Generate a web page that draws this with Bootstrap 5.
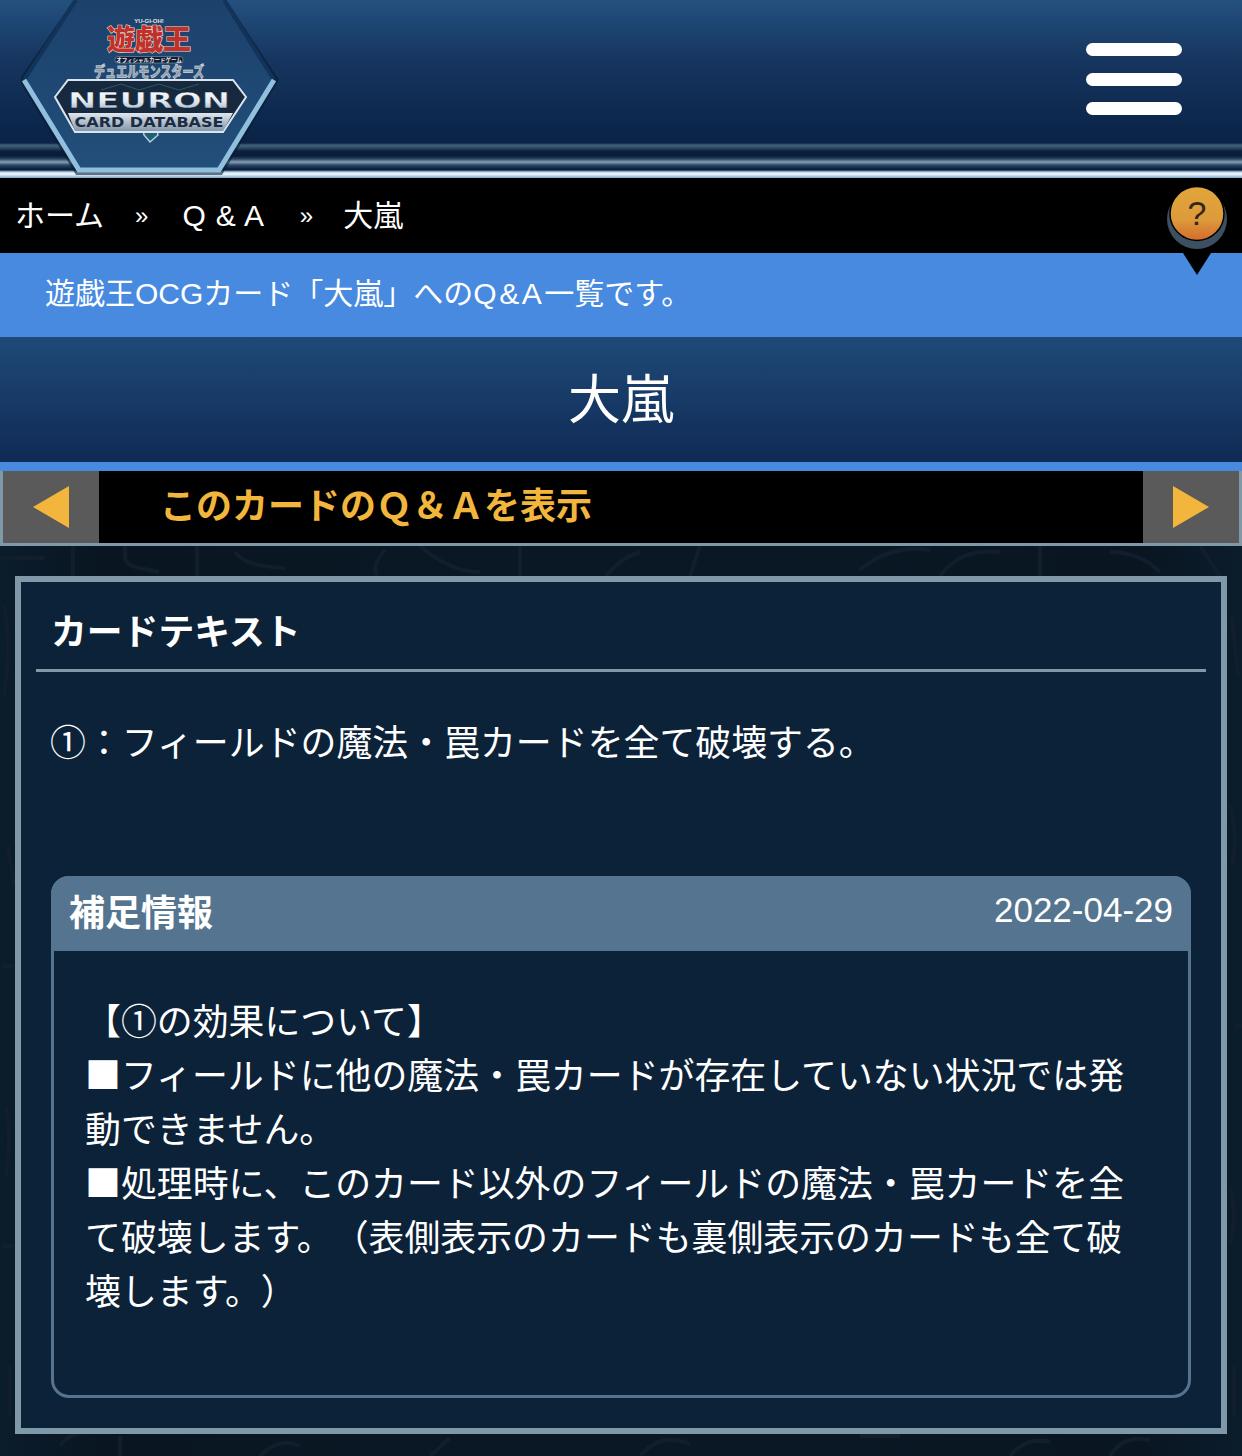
<!DOCTYPE html>
<html lang="ja">

<head>
  <meta charset="UTF-8">
  <meta name="viewport" content="width=device-width, initial-scale=1">
  <title>大嵐 Q&amp;A</title>
  <link href="https://cdn.jsdelivr.net/npm/bootstrap@5.3.3/dist/css/bootstrap.min.css" rel="stylesheet">
  <style>
    body {
      background: linear-gradient(90deg, #0b1c2b, #091622 8%, #0a1825 50%, #091622 92%, #0b1c2b);
      color: #ffffff;
      font-family: "Liberation Sans", "Noto Sans CJK JP", sans-serif;
      overflow-x: hidden;
      text-spacing-trim: space-all;
    }

    .site-head {
      height: 178px;
      background: linear-gradient(#24507f 0, #16355f 60px, #0a2347 140px, #0a2347 178px);
      position: relative;
    }

    .head-lines {
      position: absolute;
      left: 0;
      right: 0;
      bottom: 0;
      height: 36px;
      background: linear-gradient(#0a2347 0, #0a2347 1px, #3f5f7a 3px, #37566f 5px, #0b2140 9px, #091c38 14px, #2a4764 17px, #86a0b3 20px, #2e4a66 23px, #0a1f3d 27px, #0b2242 28px, #b9d4e6 30px, #f6fbfe 32px, #b4d3e8 34px, #7ba9c8 36px);
    }

    .logo-box {
      position: absolute;
      left: 21px;
      top: 0;
      width: 258px;
      height: 176px;
    }

    .menu-btn {
      position: absolute;
      left: 1086px;
      top: 43px;
      width: 96px;
      height: 72px;
      padding: 0;
      border: 0;
      background: none;
    }

    .menu-btn span {
      display: block;
      height: 13px;
      border-radius: 7px;
      background-color: #ffffff;
      margin-bottom: 16.5px;
    }

    .crumb-bar {
      height: 75px;
      background-color: #000000;
      font-size: 30px;
      padding-left: 15px;
      position: relative;
    }

    .crumb-sep {
      font-size: 24px;
      margin: 0 34px 0 31px;
    }

    .crumb-qa {
      letter-spacing: .8px;
      margin-right: 4px;
    }

    .crumb-last {
      margin-left: -4px;
    }

    .help-pin {
      position: absolute;
      left: 1167px;
      top: 184px;
      width: 60px;
      height: 92px;
    }

    .lead-bar {
      height: 84px;
      background-color: #478ae0;
      font-size: 30px;
      padding: 0 0 4px 45px;
    }

    .lead-qa {
      letter-spacing: 2.5px;
    }

    .title-bar {
      height: 125px;
      background: linear-gradient(#1f4a78, #0f2a54);
      font-size: 53px;
      padding-top: 2px;
    }

    .pager-wrap {
      height: 84px;
      border-top: 9px solid #478ae0;
    }

    .pager-row {
      height: 75px;
      border: 3px solid #7f99a8;
      border-top: 0;
      background-color: #000000;
    }

    .pager-arrow {
      width: 96px;
      background-color: #5a5a5a;
    }

    .pager-label {
      color: #f2b63d;
      font-size: 36px;
      font-weight: 700;
      padding-left: 61px;
    }

    .page-main {
      position: relative;
      padding: 30px 15px 22px;
    }

    .bg-pattern {
      position: absolute;
      left: 0;
      top: 0;
      width: 1242px;
      height: 910px;
    }

    .text-panel {
      position: relative;
      border: 6px solid #7f99a8;
      background-color: #0c2239;
      height: 858px;
      padding: 0 15px;
      font-family: "Noto Sans CJK JP", sans-serif;
    }

    .panel-head {
      height: 90px;
      border-bottom: 3px solid #7f99a8;
      font-size: 35.8px;
      font-weight: 700;
      padding: 23px 0 0 15px;
      line-height: 48px;
    }

    .card-text {
      height: 204px;
      font-size: 35.9px;
      line-height: 54px;
      padding: 41px 0 0 14px;
      margin: 0;
    }

    .note-box {
      margin: 0 15px;
      height: 522px;
      border: 3px solid #54748f;
      border-radius: 18px;
    }

    .note-head {
      height: 75px;
      margin: -3px -3px 0;
      background-color: #54748f;
      border-radius: 18px 18px 0 0;
      padding: 0 18px;
    }

    .note-title {
      font-size: 36px;
      font-weight: 700;
      margin-top: -7px;
    }

    .note-date {
      font-family: "Liberation Sans", sans-serif;
      font-size: 35px;
      margin-top: -7px;
    }

    .note-body {
      font-size: 35.9px;
      line-height: 54px;
      padding: 41px 53px 0 31px;
      margin: 0;
    }
  </style>
</head>

<body>
  <header class="site-head">
    <div class="head-lines"></div>
    <svg class="logo-box" viewBox="0 0 258 176">
      <defs>
        <linearGradient id="hexFill" x1="0" y1="0" x2="0" y2="1">
          <stop offset="0" stop-color="#1c426c" />
          <stop offset=".55" stop-color="#1f4874" />
          <stop offset="1" stop-color="#234f7b" />
        </linearGradient>
        <linearGradient id="silver" x1="0" y1="0" x2="0" y2="1">
          <stop offset="0" stop-color="#ffffff" />
          <stop offset=".55" stop-color="#dfe8f0" />
          <stop offset="1" stop-color="#8ea6bc" />
        </linearGradient>
        <linearGradient id="band" x1="0" y1="0" x2="0" y2="1">
          <stop offset="0" stop-color="#dfe7ee" />
          <stop offset="1" stop-color="#8597aa" />
        </linearGradient>
      </defs>
      <polygon points="54,-2 204,-2 258,80 201,175 55,175 -2,80" fill="#071a33" opacity=".6" />
      <polygon points="55,0 203,0 253,80 198,170 58,170 3,80" fill="url(#hexFill)" />
      <polyline points="55,0 3,80" fill="none" stroke="#12335a" stroke-width="4" />
      <polyline points="203,0 253,80" fill="none" stroke="#12335a" stroke-width="4" />
      <polyline points="3,80 58,170 198,170 253,80" fill="none" stroke="#90c0de" stroke-width="5" />

      <text x="128" y="23" text-anchor="middle" font-size="6" font-weight="700" fill="#e4e4e4">YU-GI-OH!</text>
      <text x="128" y="50" text-anchor="middle" font-size="28" font-weight="900" fill="#c2302c" stroke="#efd9c4" stroke-width="1.2" paint-order="stroke" style="font-family:'Noto Sans CJK JP',sans-serif">遊戯王</text>
      <rect x="94" y="56.500" width="68" height="6.500" rx="3" fill="#0f1d33" stroke="#9fb0bf" stroke-width=".5" />
      <text x="128" y="62" text-anchor="middle" font-size="5.500" font-weight="700" fill="#e8e8e8" style="font-family:'Noto Sans CJK JP',sans-serif">オフィシャルカードゲーム</text>
      <text x="128" y="77" text-anchor="middle" font-size="15" font-weight="900" fill="#8d99a6" stroke="#e8edf2" stroke-width=".5" textLength="110" lengthAdjust="spacingAndGlyphs" style="font-family:'Noto Sans CJK JP',sans-serif">デュエルモンスターズ</text>

      <polygon points="121,126 135,126 137,135 129,142 123,135" fill="#1f5f78" stroke="#b7cfdc" stroke-width="1.500" />
      <polygon points="34,97 47,80 212,80 225,97 202,132 54,132" fill="#16293f" stroke="#dbe5ee" stroke-width="2" />
      <polygon points="47,113 212,113 202,131 54,131" fill="url(#band)" />
      <polyline points="80,90 100,84 118,90 138,84 158,90 178,84" fill="none" stroke="#2c5a58" stroke-width="1" />
      <text x="128" y="108" text-anchor="middle" font-size="22" font-weight="700" fill="url(#silver)" stroke="#0c1a2b" stroke-width=".4" textLength="162" lengthAdjust="spacingAndGlyphs" style="font-family:'DejaVu Sans',sans-serif">NEURON</text>
      <text x="128" y="127" text-anchor="middle" font-size="14" font-weight="700" fill="#1c2c42" textLength="149" lengthAdjust="spacingAndGlyphs" style="font-family:'DejaVu Sans',sans-serif">CARD DATABASE</text>
    </svg>
    <button class="menu-btn" type="button" aria-label="メニュー"><span></span><span></span><span></span></button>
  </header>

  <nav class="crumb-bar d-flex align-items-center">
    <span>ホーム</span><span class="crumb-sep">»</span><span class="crumb-qa">Q &amp; A</span><span class="crumb-sep">»</span><span class="crumb-last">大嵐</span>
  </nav>

  <svg class="help-pin" viewBox="0 0 60 92">
    <defs>
      <linearGradient id="coin" x1="0" y1="0" x2="0" y2="1">
        <stop offset="0" stop-color="#e2a63c" />
        <stop offset=".6" stop-color="#dd9b3a" />
        <stop offset="1" stop-color="#d26c2e" />
      </linearGradient>
    </defs>
    <polygon points="16,69 44,69 30,91" fill="#000" />
    <circle cx="30" cy="35" r="30" fill="#3d5062" />
    <circle cx="30" cy="29.500" r="27" fill="url(#coin)" stroke="#000" stroke-width="1.500" />
    <text x="30" y="41" text-anchor="middle" font-size="34" fill="#33271a" style="font-family:'Liberation Sans',sans-serif">?</text>
  </svg>

  <div class="lead-bar d-flex align-items-center"><span>遊戯王OCGカード「大嵐」への<span class="lead-qa">Q&amp;A</span>一覧です。</span></div>

  <div class="title-bar d-flex align-items-center justify-content-center">大嵐</div>

  <div class="pager-wrap">
    <div class="pager-row d-flex">
      <div class="pager-arrow d-flex align-items-center justify-content-center">
        <svg width="36" height="42" viewBox="0 0 36 42"><polygon points="0,21 36,0 36,42" fill="#f2b63d" /></svg>
      </div>
      <div class="pager-label flex-grow-1 d-flex align-items-center">このカードのＱ＆Ａを表示</div>
      <div class="pager-arrow d-flex align-items-center justify-content-center">
        <svg width="36" height="42" viewBox="0 0 36 42"><polygon points="36,21 0,0 0,42" fill="#f2b63d" /></svg>
      </div>
    </div>
  </div>

  <main class="page-main">
    <!-- faint card-back pattern behind the panel -->
    <svg class="bg-pattern" viewBox="0 0 1242 910" fill="none" stroke="#111f2c" stroke-width="4">
      <path d="M0 12h44M73 0v30M197 0v30M125 0v12q2 8 14 10l20 4M235 6q8 14 50 16" />
      <path d="M385 4q-14 16-8 26M420 0q30 26 60 26M520 0v30M640 6q-20 6-34 24M700 0l-10 30" />
      <path d="M860 24q30-26 70-20M940 30q20-28 60-24M1040 0v30M1110 6q30 0 50 20M1200 0l20 30" />
      <path d="M4 60q8 40 0 90M8 300l6 40M2 420h12M6 560q6 30 0 70M2 700h12M10 820v50" />
      <path d="M1232 70l6 60M1230 260q8 30 2 60M1234 480h8M1230 640q8 30 0 60M1234 820v50" />
      <path d="M60 900q10-16 40-14M120 910v-20M260 910q20-20 40-10M430 910l20-18M640 910q20-24 50-12M860 890h40M1010 910q16-20 40-14M1110 910q14-22 40-16" />
    </svg>
    <div class="text-panel">
      <div class="panel-head">カードテキスト</div>
      <p class="card-text">①：フィールドの魔法・罠カードを全て破壊する。</p>
      <section class="note-box">
        <div class="note-head d-flex align-items-center justify-content-between">
          <span class="note-title">補足情報</span>
          <span class="note-date">2022-04-29</span>
        </div>
        <p class="note-body">【①の効果について】<br>■フィールドに他の魔法・罠カードが存在していない状況では発動できません。<br>■処理時に、このカード以外のフィールドの魔法・罠カードを全て破壊します。（表側表示のカードも裏側表示のカードも全て破壊します。）</p>
      </section>
    </div>
  </main>

  <script src="https://cdn.jsdelivr.net/npm/bootstrap@5.3.3/dist/js/bootstrap.bundle.min.js"></script>
</body>

</html>
